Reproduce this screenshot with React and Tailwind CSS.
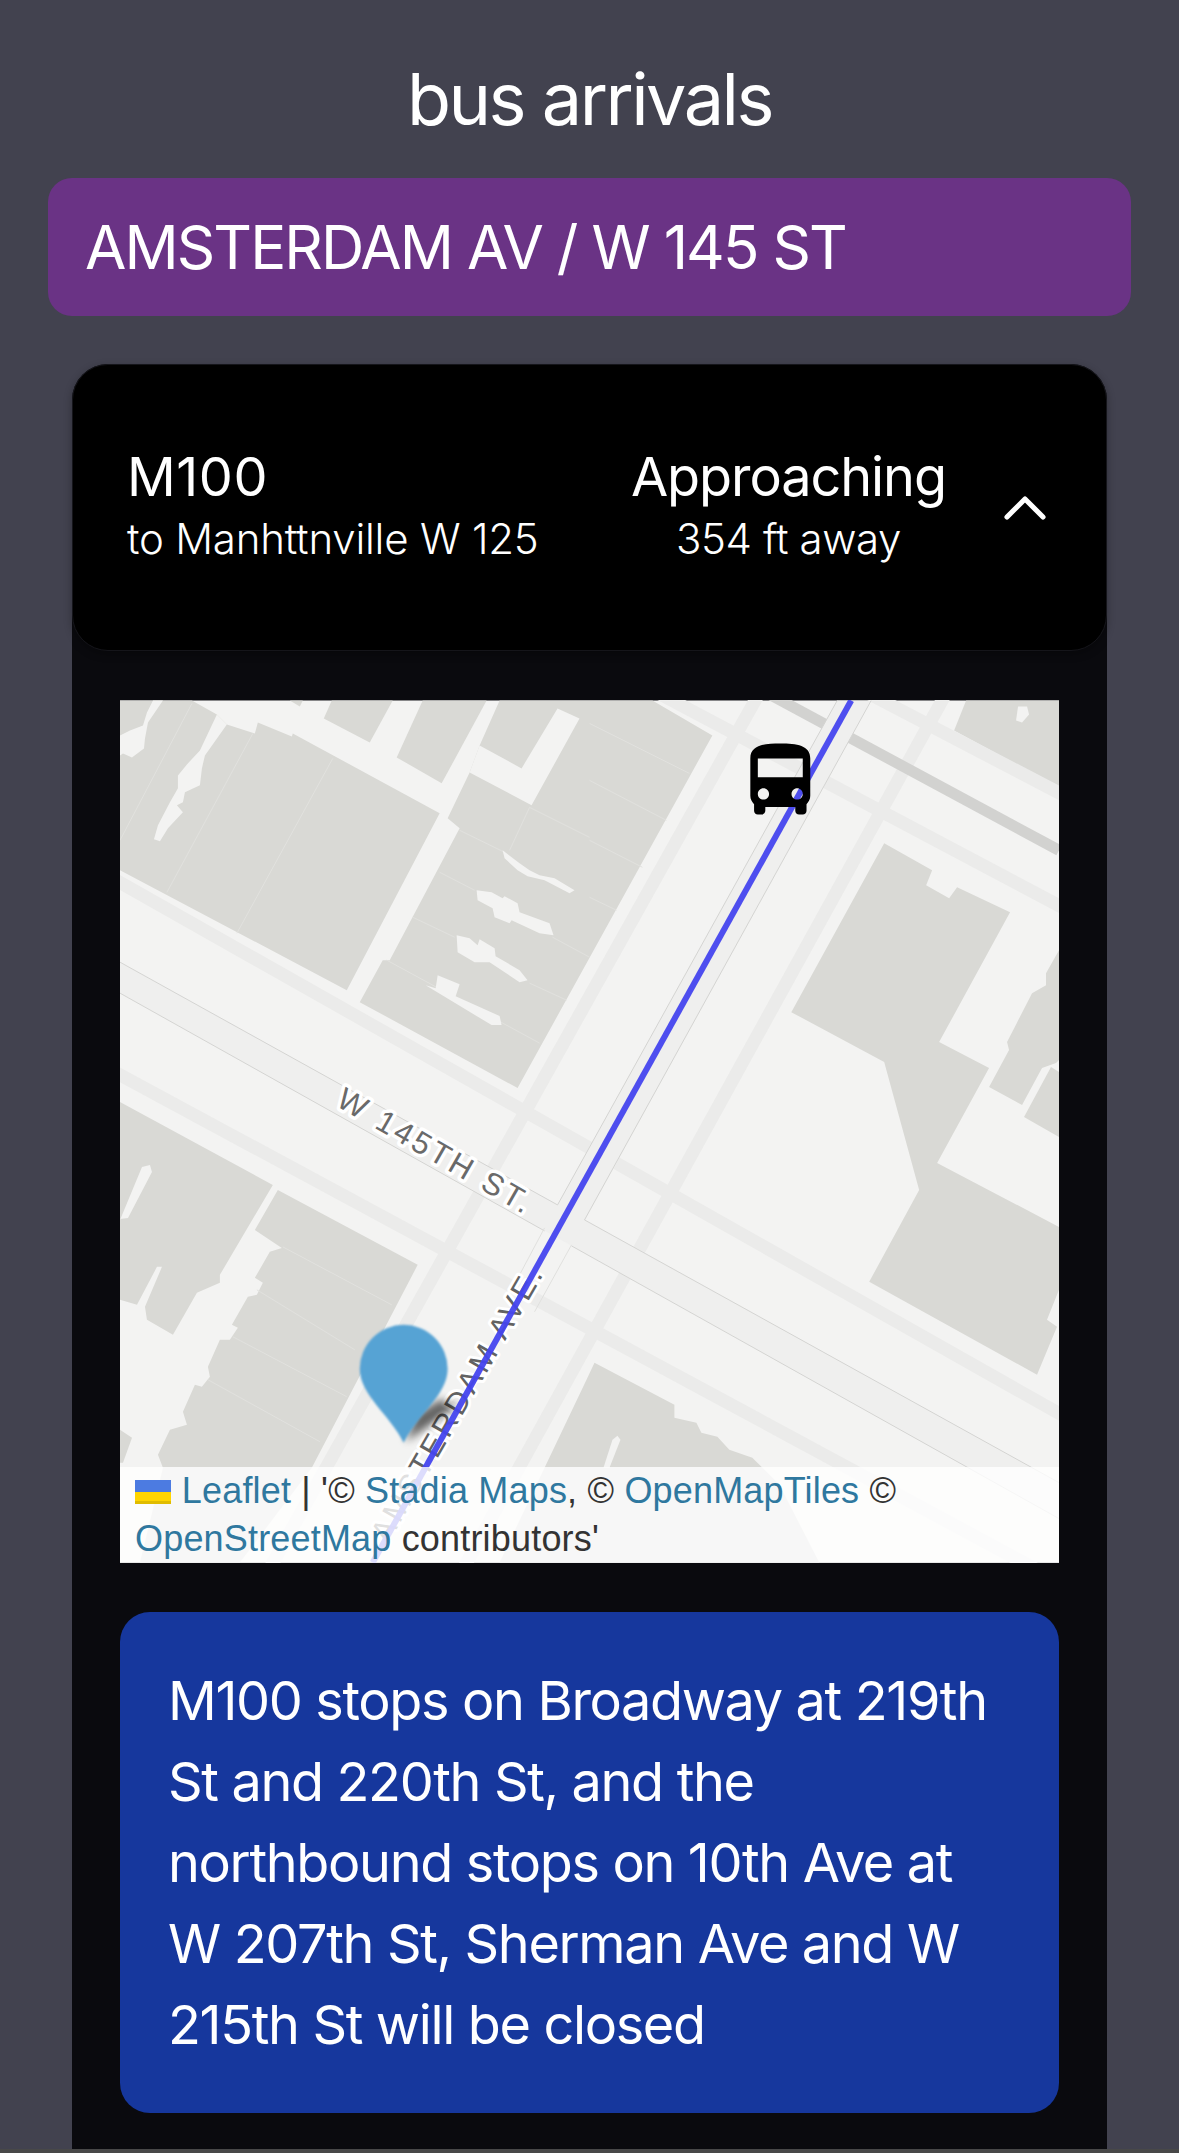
import React from 'react';
import { ChevronUp } from 'lucide-react';

const sans = 'font-[Inter,"Noto_Sans",sans-serif]';

// map drawing, in pixels of the 940x863 map box
const buildings = [
  '0,0 72,0 97,14 107,24 135,33 138,22 172,36 173,33 320,113 227,290 0,170',
  '170,0 183,0 180,6',
  '212,0 273,0 250,42 204,18',
  '303,0 277,57 322,83 367,0',
  '380,0 533,0 593,35 398,388 240,302 263,260 270,260 340,128 328,118 350,72 360,45',
  '847,0 940,0 940,87 835,30',
  '765,143 813,170 807,185 830,198 838,187 891,212 820,342 870,368 818,463 940,527 940,590 928,620 938,627 918,675 750,582 800,490 765,362 672,312',
  '940,250 927,273 927,285 913,293 888,342 890,350 870,387 903,405 923,368 937,363 940,360',
  '932,367 905,417 940,437 940,372',
  '0,402 153,485 100,575 100,583 77,593 53,635 27,620 25,607 42,567 37,567 17,605 0,600',
  '158,490 298,565 192,768 120,863 20,863 43,768 38,755 50,730 67,725 63,712 75,685 82,687 90,677 88,667 100,640 110,640 118,628 112,625 128,597 137,595 143,583 135,578 150,552 162,548 135,530',
  '0,730 12,738 3,763 0,763',
  '475,663 555,705 555,718 577,723 582,733 598,737 610,750 633,758 660,785 700,863 380,863 425,768 467,680',
];

// gaps and light yards cut out of the buildings
const yards = [
  '360,45 402,68 438,8 460,18 412,105 350,72',
  '33,0 43,0 28,22 25,38 24,48 12,57 3,53 0,55 0,35 10,30 23,25 27,12',
  '97,14 107,24 85,55 82,68 80,85 65,92 63,102 57,105 63,112 48,128 40,141 34,139 38,125 50,102 58,88 58,75 67,64 80,50',
  '383,150 400,163 410,170 420,175 435,178 455,190 450,193 425,180 408,176 398,170 385,158',
  '357,190 372,192 383,198 385,196 398,203 400,212 430,223 434,235 420,233 392,220 390,223 375,217 373,208 358,200',
  '337,235 350,238 358,245 360,239 375,248 376,256 400,270 408,280 400,282 370,262 355,262 338,252',
  '318,275 340,284 336,296 380,316 382,325 372,325 306,285 316,288',
  '0,520 22,467 30,465 32,472 8,518 0,519',
  '493,740 498,736 501,740 490,768 484,768',
  '899,6 908,6 910,14 903,22 897,20',
];

const lotLines = [
  [47, 192, 133, 33], [117, 233, 213, 58], [0, 140, 72, 3],
  [340, 130, 385, 152], [320, 172, 355, 190], [293, 217, 335, 237], [267, 260, 420, 343],
  [410, 107, 390, 150], [410, 107, 470, 137], [470, 23, 570, 73], [470, 80, 547, 120],
  [470, 140, 523, 167], [470, 197, 497, 210], [433, 237, 470, 257], [410, 283, 447, 300],
  [163, 547, 272, 605], [137, 590, 235, 650], [113, 637, 227, 697], [88, 680, 200, 742],
];

const roads = [
  [-20, 171, 960, 725],
  [-20, 364, 960, 893],
  [515, -20, 960, 216],
  [715, -25, 960, 103],
  [647, -20, 142, 883],
  [834, -20, 336, 883],
];

const kerbs = [
  [0, 262, 438, 505], [465, 520, 940, 783],
  [0, 293, 425, 531], [452, 546, 940, 819],
  [718, 0, 438, 505], [752, 0, 465, 520],
];

const busPath =
  'M4 16c0 .88.39 1.67 1 2.22V20c0 .55.45 1 1 1h1c.55 0 1-.45 1-1v-1h8v1c0 .55.45 1 1 1h1c.55 0 1-.45 1-1v-1.78c.61-.55 1-1.34 1-2.22V6c0-3.5-3.58-4-8-4s-8 .5-8 4v10zm3.5 1c-.83 0-1.5-.67-1.5-1.5S6.67 14 7.5 14s1.5.67 1.5 1.5S8.33 17 7.5 17zm9 0c-.83 0-1.5-.67-1.5-1.5s.67-1.5 1.5-1.5 1.5.67 1.5 1.5-.67 1.5-1.5 1.5zm1.5-6H6V6h12v5z';

const MapDrawing = () => (
  <svg viewBox="0 0 940 863" className="w-full h-full">
    <defs>
      <filter id="soft" x="-100%" y="-100%" width="300%" height="300%">
        <feGaussianBlur stdDeviation="4" />
      </filter>
      <filter id="edge" x="-10%" y="-10%" width="120%" height="120%">
        <feGaussianBlur stdDeviation="0.8" />
      </filter>
    </defs>
    <rect width="940" height="863" fill="#f3f3f2" />
    {buildings.map((points) => (
      <polygon key={points} points={points} fill="#d9d9d5" />
    ))}
    {lotLines.map(([x1, y1, x2, y2]) => (
      <line key={`${x1}-${y1}-${x2}`} x1={x1} y1={y1} x2={x2} y2={y2} stroke="#e1e1de" strokeWidth="1" />
    ))}
    {yards.map((points) => (
      <polygon key={points} points={points} fill="#f3f3f2" />
    ))}
    {roads.map(([x1, y1, x2, y2]) => (
      <line key={`${x1}-${y1}`} x1={x1} y1={y1} x2={x2} y2={y2} stroke="#ebebea" strokeWidth="13" />
    ))}
    <line x1="643" y1="-10" x2="940" y2="150" stroke="#d2d2d0" strokeWidth="11" />
    <polygon points="0,262 940,783 940,819 0,293" fill="#efefee" />
    <polygon points="718,0 752,0 452,545 425,528" fill="#efefee" />
    {kerbs.map(([x1, y1, x2, y2]) => (
      <line key={`${x1}-${y1}`} x1={x1} y1={y1} x2={x2} y2={y2} stroke="#d4d4d2" strokeWidth="1" />
    ))}
    <line x1="425" y1="528" x2="392" y2="590" stroke="#e0e0de" strokeWidth="1" />
    <line x1="452" y1="545" x2="415" y2="612" stroke="#e0e0de" strokeWidth="1" />

    <text
      transform="translate(215 405) rotate(30)"
      fontFamily="Liberation Sans, sans-serif"
      fontSize="31"
      letterSpacing="3.4"
      fill="#6a6a6a"
      stroke="#ffffff"
      strokeWidth="7"
      strokeLinejoin="round"
      paintOrder="stroke"
    >
      W 145TH ST.
    </text>
    <text
      transform="translate(268 845) rotate(-60)"
      fontFamily="Liberation Sans, sans-serif"
      fontSize="31"
      letterSpacing="3"
      fill="#626262"
      stroke="#ffffff"
      strokeWidth="6"
      strokeLinejoin="round"
      paintOrder="stroke"
    >
      AMSTERDAM AVE.
    </text>

    <path d="M286 742 L296 715 L320 700 L338 706 Z" fill="#000000" opacity="0.6" filter="url(#soft)" />
    <line x1="732" y1="0" x2="253" y2="863" stroke="#4545ee" strokeOpacity="0.95" strokeWidth="6" />
    <path
      d="M284 743 C270 715 240 695 240 669 A44 44 0 0 1 328 669 C328 695 298 715 284 743 Z"
      fill="#56a3d4"
      filter="url(#edge)"
    />
    <path d={busPath} transform="translate(616 35.5) scale(3.75)" fill="#000000" />
  </svg>
);

const Attribution = () => (
  <div className="absolute bottom-0 left-0 w-full bg-white/80 px-[15px] text-[36px] leading-[48px] tracking-[0.005em] text-[#333333] font-['Liberation_Sans',Arial,sans-serif]">
    <a className="text-[#2f789f]">
      <svg viewBox="0 0 12 8" className="inline w-[36px] h-[24px] mr-[0.3em] align-[-1px]">
        <rect width="12" height="4" fill="#4C7BE1" />
        <rect y="4" width="12" height="3" fill="#FFD500" />
        <rect y="7" width="12" height="1" fill="#E0BC00" />
      </svg>
      Leaflet
    </a>{' '}
    <span>|</span> '© <a className="text-[#2f789f]">Stadia Maps</a>, ©{' '}
    <a className="text-[#2f789f]">OpenMapTiles</a> ©{' '}
    <a className="text-[#2f789f]">OpenStreetMap</a> contributors'
  </div>
);

const App = () => {
  return (
    <div className={`w-full h-[2153px] overflow-hidden bg-[#42424f] text-white ${sans}`}>
      <div className="h-[2149px] overflow-hidden">
        <h1 className="pt-[45px] text-center text-[72px] leading-[108px] tracking-[-0.035em] font-normal">bus arrivals</h1>

        <div className="mt-[25px] mx-[48px] h-[138px] flex items-center rounded-[24px] bg-[#6a3385] px-[37px] text-[60px] tracking-[-0.032em]">
          AMSTERDAM AV / W 145 ST
        </div>

        <div className="mt-[48px] mx-[72px] h-[1785px] rounded-t-[36px] bg-[#0a0a0e]">
          <div className="h-[287px] flex items-center justify-between rounded-[36px] bg-black border border-[#15151a] pl-[54px] pr-[45px] pb-[4px] shadow-[0_3px_9px_rgba(0,0,0,0.3)]">
            <div>
              <div className="text-[54px] leading-[66px] tracking-[0.01em]">M100</div>
              <div className="text-[42px] leading-[58px] tracking-[-0.005em] font-light">to Manhttnville W 125</div>
            </div>
            <div className="ml-auto text-center">
              <div className="text-[54px] leading-[66px] tracking-[-0.02em]">Approaching</div>
              <div className="text-[42px] leading-[58px] tracking-[-0.01em] font-light">354 ft away</div>
            </div>
            <ChevronUp size={72} strokeWidth={1.7} className="ml-[43px] mt-[4px]" />
          </div>

          <div className="pt-[49px] px-[48px]">
            <div className="relative h-[863px] overflow-hidden">
              <MapDrawing />
              <Attribution />
            </div>

            <div className="mt-[49px] rounded-[30px] bg-[#16379d] p-[48px] text-[54px] leading-[81px] tracking-[-0.025em]">
              M100 stops on Broadway at 219th St and 220th St, and the northbound stops on 10th Ave at W 207th St, Sherman Ave and W 215th St will be closed
            </div>
          </div>
        </div>
      </div>
      <div className="h-[4px] bg-[#484848]" />
    </div>
  );
};

export default App;
